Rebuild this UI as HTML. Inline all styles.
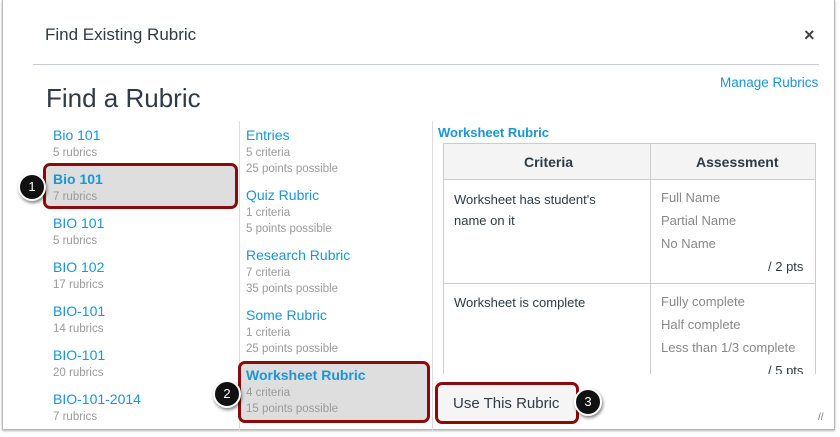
<!DOCTYPE html>
<html><head><style>
*{margin:0;padding:0;box-sizing:border-box}
body{width:840px;height:437px;background:#fff;font-family:"Liberation Sans",sans-serif;position:relative;overflow:hidden}
.a{position:absolute;white-space:nowrap}
.l{color:#1a95d8;font-size:14px}
.s{color:#9a9a9a;font-size:11.5px}
.g{color:#888;font-size:13px}
.dk{color:#2d3b45}
.badge{position:absolute;width:28px;height:28px;border-radius:50%;background:#111;border:2px solid #fff;color:#fff;font-size:13px;text-align:center;line-height:24px;box-shadow:1px 2px 3px rgba(0,0,0,.5)}
.hl{position:absolute;border:3px solid #8b0a0a;border-radius:7px;background:#dedede}
</style></head><body>
<div class="a" style="left:2px;top:0;width:833px;height:430px;border:1px solid #bbb;border-top:none;box-shadow:0 1px 2px rgba(0,0,0,.3)"></div>
<div class="a dk" style="left:45px;top:25px;font-size:17px">Find Existing Rubric</div>
<div class="a" style="left:804px;top:25px;font-size:18px;font-weight:bold;color:#444">×</div>
<div class="a" style="left:33px;top:64px;width:786px;height:1px;background:#c7cdd1"></div>
<div class="a" style="left:720px;top:75px;font-size:13.5px;color:#1a95d8">Manage Rubrics</div>
<div class="a dk" style="left:46px;top:83px;font-size:26px">Find a Rubric</div>
<div class="a" style="left:239px;top:121px;width:1px;height:310px;background:#ddd"></div>
<div class="a" style="left:432px;top:121px;width:1px;height:310px;background:#ddd"></div>

<div class="hl" style="left:43px;top:163px;width:195px;height:46px"></div>
<div class="hl" style="left:238px;top:361px;width:192px;height:62px"></div>

<div class="a l" style="left:53px;top:127px">Bio 101</div><div class="a s" style="left:53px;top:147px">5 rubrics</div>
<div class="a l" style="left:53px;top:171px;font-weight:bold">Bio 101</div><div class="a s" style="left:53px;top:191px">7 rubrics</div>
<div class="a l" style="left:53px;top:215px">BIO 101</div><div class="a s" style="left:53px;top:235px">5 rubrics</div>
<div class="a l" style="left:53px;top:259px">BIO 102</div><div class="a s" style="left:53px;top:279px">17 rubrics</div>
<div class="a l" style="left:53px;top:303px">BIO-101</div><div class="a s" style="left:53px;top:323px">14 rubrics</div>
<div class="a l" style="left:53px;top:347px">BIO-101</div><div class="a s" style="left:53px;top:367px">20 rubrics</div>
<div class="a l" style="left:53px;top:391px">BIO-101-2014</div><div class="a s" style="left:53px;top:411px">7 rubrics</div>

<div class="a l" style="left:246px;top:127px">Entries</div><div class="a s" style="left:246px;top:147px">5 criteria</div><div class="a s" style="left:246px;top:163px">25 points possible</div>
<div class="a l" style="left:246px;top:187px">Quiz Rubric</div><div class="a s" style="left:246px;top:207px">1 criteria</div><div class="a s" style="left:246px;top:223px">5 points possible</div>
<div class="a l" style="left:246px;top:247px">Research Rubric</div><div class="a s" style="left:246px;top:267px">7 criteria</div><div class="a s" style="left:246px;top:283px">35 points possible</div>
<div class="a l" style="left:246px;top:307px">Some Rubric</div><div class="a s" style="left:246px;top:327px">1 criteria</div><div class="a s" style="left:246px;top:343px">25 points possible</div>
<div class="a l" style="left:246px;top:367px;font-weight:bold">Worksheet Rubric</div><div class="a s" style="left:246px;top:387px">4 criteria</div><div class="a s" style="left:246px;top:403px">15 points possible</div>

<div class="a" style="left:438px;top:125px;font-size:13px;font-weight:bold;color:#1a95d8">Worksheet Rubric</div>
<div class="a" style="left:443px;top:143px;width:373px;height:231px;overflow:hidden;border:1px solid #ccc;border-bottom:none">
 <div class="a" style="left:0;top:0;width:373px;height:36px;background:#f4f4f4;border-bottom:1px solid #ccc"></div>
 <div class="a" style="left:206px;top:0;width:1px;height:240px;background:#ccc"></div>
 <div class="a" style="left:0;top:139px;width:373px;height:1px;background:#ccc"></div>
 <div class="a dk" style="left:80px;top:10px;font-size:14px;font-weight:bold">Criteria</div>
 <div class="a dk" style="left:252px;top:10px;font-size:14px;font-weight:bold">Assessment</div>
 <div class="a dk" style="left:10px;top:45px;font-size:13px;line-height:21px;white-space:normal;width:160px">Worksheet has student's name on it</div>
 <div class="a g" style="left:217px;top:46px">Full Name</div>
 <div class="a g" style="left:217px;top:69px">Partial Name</div>
 <div class="a g" style="left:217px;top:92px">No Name</div>
 <div class="a dk" style="left:324px;top:115px;font-size:13px">/ 2 pts</div>
 <div class="a dk" style="left:10px;top:151px;font-size:13px">Worksheet is complete</div>
 <div class="a g" style="left:217px;top:150px">Fully complete</div>
 <div class="a g" style="left:217px;top:173px">Half complete</div>
 <div class="a g" style="left:217px;top:196px">Less than 1/3 complete</div>
 <div class="a dk" style="left:324px;top:219px;font-size:13px">/ 5 pts</div>
</div>

<div class="a" style="left:435px;top:382px;width:144px;height:42px;border:3px solid #8b0a0a;border-radius:7px;background:#f5f5f5"></div>
<div class="a dk" style="left:453px;top:395px;font-size:15px">Use This Rubric</div>

<div class="badge" style="left:18px;top:173px">1</div>
<div class="badge" style="left:213px;top:380px">2</div>
<div class="badge" style="left:574px;top:388px">3</div>
<div class="a" style="left:818px;top:412px;font-size:10px;color:#777">//</div>
</body></html>
